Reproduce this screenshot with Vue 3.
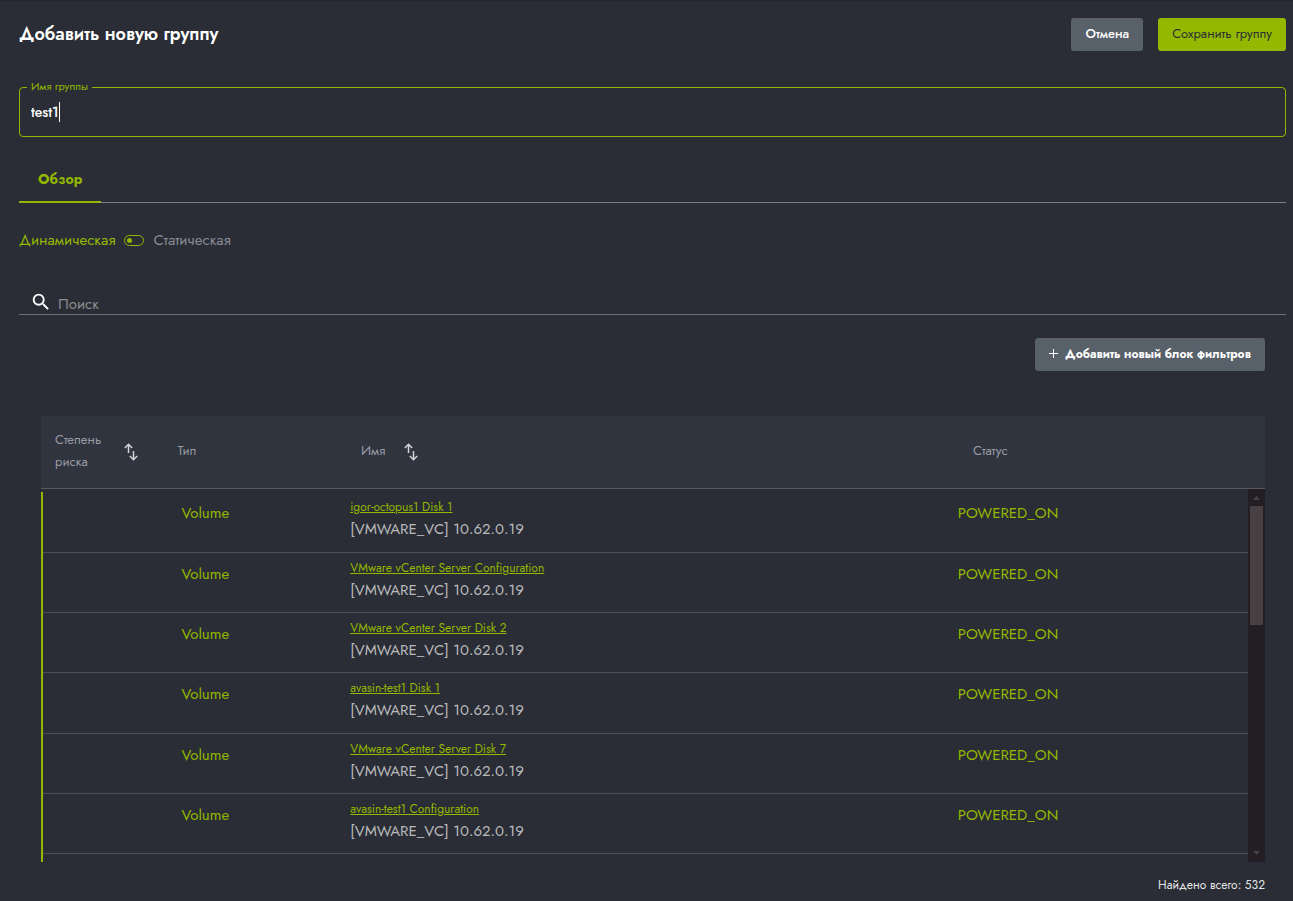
<script setup>
import { ref } from 'vue'

const groupName = ref('test1')
const query = ref('')
const isStatic = ref(false)
const host = '[VMWARE_VC] 10.62.0.19'
const total = 532

const rows = [
  'igor-octopus1 Disk 1',
  'VMware vCenter Server Configuration',
  'VMware vCenter Server Disk 2',
  'avasin-test1 Disk 1',
  'VMware vCenter Server Disk 7',
  'avasin-test1 Configuration'
]
</script>

<template>
  <main class="page">
    <header class="top">
      <h1>Добавить новую группу</h1>
      <div class="actions">
        <button type="button" class="btn cancel">Отмена</button>
        <button type="button" class="btn primary">Сохранить группу</button>
      </div>
    </header>

    <div class="field">
      <label for="group-name">Имя группы</label>
      <input id="group-name" v-model="groupName" type="text" />
      <span class="caret"></span>
    </div>

    <nav class="tabs">
      <button type="button" class="tab">Обзор</button>
    </nav>

    <label class="mode">
      <span :class="{ on: !isStatic }">Динамическая</span>
      <input v-model="isStatic" type="checkbox" />
      <span :class="{ on: isStatic }">Статическая</span>
    </label>

    <div class="search">
      <label for="search" aria-label="Поиск">
        <svg width="22" height="22" viewBox="0 0 24 24" fill="#fff">
          <path d="M15.5 14h-.79l-.28-.27A6.47 6.47 0 0 0 16 9.5 6.5 6.5 0 1 0 9.5 16c1.61 0 3.09-.59 4.23-1.57l.27.28v.79l5 4.99L20.49 19l-4.99-5zm-6 0C7.01 14 5 11.99 5 9.5S7.01 5 9.5 5 14 7.01 14 9.5 11.99 14 9.5 14z" />
        </svg>
      </label>
      <input id="search" v-model="query" type="text" placeholder="Поиск" />
    </div>

    <section class="content">
      <div class="toolbar">
        <button type="button" class="btn filter">
          <svg width="10" height="10" viewBox="0 0 10 10" fill="none" stroke="#fff">
            <path d="M4.5 0v9M0 4.5h9" />
          </svg>
          Добавить новый блок фильтров
        </button>
      </div>

      <div class="grid">
        <table>
          <thead>
            <tr>
              <th class="risk">
                <span>Степень риска</span>
                <svg class="sort" width="14" height="18" viewBox="0 0 14 18" fill="none" stroke="#d3d4d6" stroke-width="1.5">
                  <path d="M4.5 10V1.5M.8 5l3.7-3.7L8.2 5M9.5 8v8.5M5.8 13l3.7 3.7 3.7-3.7" />
                </svg>
              </th>
              <th>Тип</th>
              <th class="sortable">
                Имя
                <svg class="sort" width="14" height="18" viewBox="0 0 14 18" fill="none" stroke="#d3d4d6" stroke-width="1.5">
                  <path d="M4.5 10V1.5M.8 5l3.7-3.7L8.2 5M9.5 8v8.5M5.8 13l3.7 3.7 3.7-3.7" />
                </svg>
              </th>
              <th>Статус</th>
            </tr>
          </thead>
          <tbody>
            <tr v-for="name in rows" :key="name">
              <td></td>
              <td class="type">Volume</td>
              <td class="name">
                <a href="#">{{ name }}</a>
                <span>{{ host }}</span>
              </td>
              <td class="status">POWERED_ON</td>
            </tr>
          </tbody>
        </table>
        <div class="scrollbar" aria-hidden="true">
          <svg width="7" height="4" viewBox="0 0 7 4"><path d="M0 4L3.5 0 7 4z" fill="#464043" /></svg>
          <div class="track"><div class="thumb"></div></div>
          <svg width="7" height="4" viewBox="0 0 7 4"><path d="M0 0h7L3.5 4z" fill="#464043" /></svg>
        </div>
      </div>

      <p class="total">Найдено всего: {{ total }}</p>
    </section>
  </main>
</template>

<style>
body {
  background: #2a2d35;
}
</style>

<style scoped>
.page {
  --green: #93b800;
  box-sizing: border-box;
  min-height: 100vh;
  padding: 17px 7px 0 19px;
  border-top: 1px solid #25272e;
  background: #2a2d35;
  color: #fff;
  font-family: Jost, Lato, "Open Sans", sans-serif;
  font-size: 15px;
}
button,
input {
  font-family: inherit;
}
.top {
  display: flex;
  align-items: center;
  justify-content: space-between;
}
h1 {
  margin: 0;
  padding-bottom: 2px;
  font-size: 18px;
  line-height: 24px;
  font-weight: 600;
}
.actions {
  display: flex;
  gap: 15px;
}
.btn {
  height: 33px;
  padding: 0 14px 2px;
  border: 0;
  border-radius: 3px;
  background: #586069;
  color: #fff;
  font-size: 13px;
  font-weight: 400;
}
.cancel {
  font-weight: 500;
}
.primary {
  background: var(--green);
  color: #2a2d35;
}
.field {
  position: relative;
  margin-top: 36px;
  border: 1px solid var(--green);
  border-radius: 4px;
}
.field label {
  position: absolute;
  top: -9px;
  left: 7px;
  padding: 0 4px;
  background: #2a2d35;
  color: var(--green);
  font-size: 11px;
  line-height: 14px;
}
.field input {
  box-sizing: border-box;
  display: block;
  width: 100%;
  height: 48px;
  padding: 0 11px;
  border: 0;
  outline: 0;
  background: none;
  color: #fff;
  font-size: 14px;
  font-weight: 500;
}
.caret {
  position: absolute;
  top: 14px;
  left: 39px;
  width: 1px;
  height: 20px;
  background: #fff;
}
.tabs {
  display: flex;
  margin-top: 20px;
  box-shadow: inset 0 -1px #7b7e85;
}
.tab {
  height: 46px;
  padding: 0 19px;
  border: 0;
  border-bottom: 2px solid var(--green);
  background: none;
  color: var(--green);
  font-size: 14px;
  font-weight: 700;
}
.mode {
  display: flex;
  align-items: center;
  width: fit-content;
  gap: 9px;
  margin-top: 27px;
  line-height: 20px;
  color: #878a94;
}
.mode .on {
  color: var(--green);
}
.mode input {
  appearance: none;
  display: flex;
  align-items: center;
  box-sizing: border-box;
  width: 20px;
  height: 11px;
  margin: 0;
  padding: 0 2px;
  border: 1px solid var(--green);
  border-radius: 6px;
}
.mode input::before {
  content: "";
  width: 5px;
  height: 5px;
  border-radius: 50%;
  background: var(--green);
}
.mode input:checked {
  justify-content: flex-end;
}
.search {
  display: flex;
  align-items: center;
  margin-top: 40px;
  padding-left: 11px;
  border-bottom: 1px solid #6b6e75;
}
.search label {
  display: flex;
}
.search input {
  flex: 1;
  height: 24px;
  margin-left: 6px;
  padding: 4px 0 0;
  box-sizing: border-box;
  border: 0;
  outline: 0;
  background: none;
  color: #fff;
  font-size: 15px;
}
.search input::placeholder {
  color: #8c8d91;
}
.content {
  padding: 23px 21px 0 22px;
}
.toolbar {
  display: flex;
  justify-content: flex-end;
}
.filter {
  display: flex;
  align-items: center;
  gap: 6px;
  font-size: 12px;
  font-weight: 700;
}
.grid {
  position: relative;
  margin-top: 45px;
}
table,
thead,
tbody {
  display: block;
}
tr {
  display: grid;
  grid-template-columns: 10% 15% 50% 25%;
}
thead tr {
  height: 72px;
  align-items: center;
  background: #30343f;
  border-bottom: 1px solid #565a5f;
}
th {
  padding: 0 14px 2px;
  color: #999ca5;
  font-size: 13px;
  line-height: 22px;
  font-weight: 400;
  text-align: left;
}
.risk,
.sortable {
  display: flex;
  align-items: center;
}
.risk span {
  width: 69px;
}
.sort {
  flex: none;
  margin-top: 2px;
}
.sortable {
  gap: 19px;
}
tbody {
  height: 370px;
  margin: 3px 17px 0 0;
  overflow: hidden;
  border-left: 2px solid var(--green);
}
tbody tr {
  height: 60px;
  border-bottom: 1px solid #4c4f56;
  box-sizing: border-box;
}
tbody tr:nth-child(3n + 1) {
  height: 61px;
}
td {
  padding: 0;
  line-height: 22px;
}
.type,
.status {
  padding-top: 10px;
  color: var(--green);
}
.type {
  padding-left: 18px;
}
.status {
  padding-left: 11px;
}
.name {
  display: flex;
  flex-direction: column;
  align-items: flex-start;
  padding: 4px 0 0 6px;
  color: #b9babc;
}
.name a {
  color: var(--green);
  font-size: 12px;
}
.scrollbar {
  position: absolute;
  top: 73px;
  right: 0;
  bottom: 0;
  display: flex;
  flex-direction: column;
  align-items: center;
  gap: 6px;
  width: 17px;
  padding: 7px 0;
  box-sizing: border-box;
  background: #231e23;
}
.scrollbar svg {
  flex: none;
}
.track {
  flex: 1;
  width: 13px;
}
.thumb {
  height: 35%;
  background: #464043;
}
.total {
  margin: 13px 0 0;
  color: #e4e5e7;
  font-size: 12px;
  line-height: 20px;
  font-weight: 400;
  text-align: right;
}
</style>
